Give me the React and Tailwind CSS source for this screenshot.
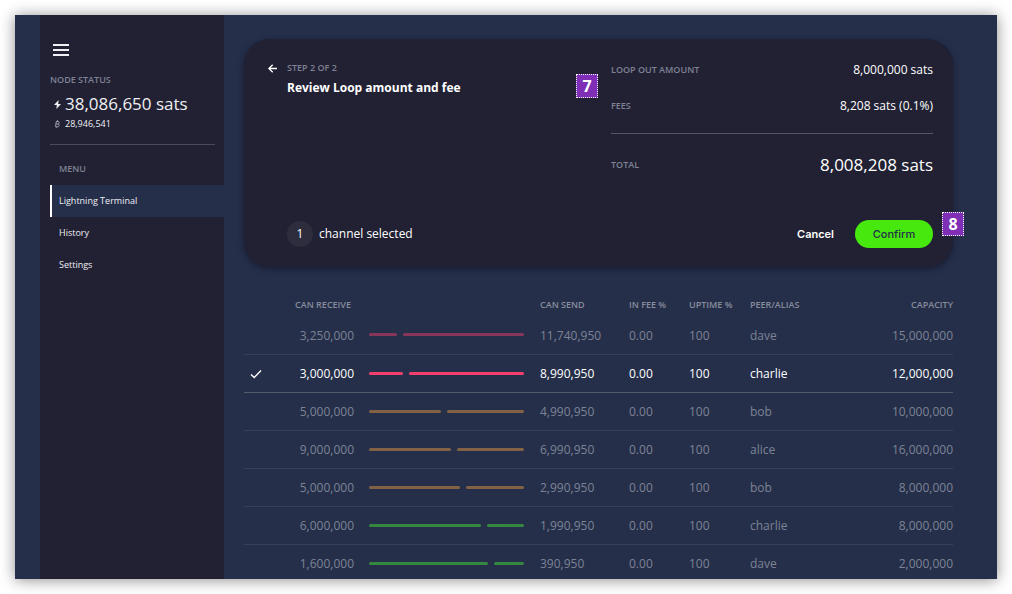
import React from "react";

const channels = [
  { receive: "3,250,000", send: "11,740,950", peer: "dave", capacity: "15,000,000", ratio: 19, tone: "bg-[#e83e6b]" },
  { receive: "3,000,000", send: "8,990,950", peer: "charlie", capacity: "12,000,000", ratio: 22.5, tone: "bg-[#f5406e]", selected: true },
  { receive: "5,000,000", send: "4,990,950", peer: "bob", capacity: "10,000,000", ratio: 48.5, tone: "bg-[#e09440]" },
  { receive: "9,000,000", send: "6,990,950", peer: "alice", capacity: "16,000,000", ratio: 55, tone: "bg-[#e09440]" },
  { receive: "5,000,000", send: "2,990,950", peer: "bob", capacity: "8,000,000", ratio: 61, tone: "bg-[#e09440]" },
  { receive: "6,000,000", send: "1,990,950", peer: "charlie", capacity: "8,000,000", ratio: 75, tone: "bg-[#46e035]" },
  { receive: "1,600,000", send: "390,950", peer: "dave", capacity: "2,000,000", ratio: 80, tone: "bg-[#46e035]" },
];

const label = "text-[9px] leading-4 font-semibold text-[#7f8193]";

function Marker({ children, className }) {
  return (
    <span
      className={`absolute flex h-6 w-[22px] items-center justify-center border border-dotted border-white bg-[#7f2fb5] text-base font-bold text-white ${className}`}
    >
      {children}
    </span>
  );
}

function MenuItem({ active, children }) {
  return (
    <li>
      <a
        href="#"
        className={`flex h-8 items-center border-l-2 pl-[7px] text-[9px] ${
          active ? "border-white bg-[#252f4a]" : "border-transparent"
        }`}
      >
        {children}
      </a>
    </li>
  );
}

function Sidebar() {
  return (
    <aside className="w-46 shrink-0 bg-[#212133] pt-[23px] pl-[10px] text-[#f0f0f4]">
      <button type="button" aria-label="Toggle menu" className="flex h-6 w-6 items-center pl-[3px]">
        <svg width="16" height="12" viewBox="0 0 16 12" fill="none" stroke="currentColor" strokeWidth="1.8">
          <path d="M0 1h16M0 6h16M0 11h16" />
        </svg>
      </button>
      <div className={`${label} mt-[10px]`}>NODE STATUS</div>
      <div className="mt-1 flex items-center gap-1 pl-1 text-[17px] leading-6">
        <svg width="7" height="9" viewBox="0 0 7 9" fill="currentColor">
          <path d="M4.6 0 0 5h2.8L2.4 9 7 3.9H4.2z" />
        </svg>
        38,086,650 sats
      </div>
      <div className="flex items-center gap-1 pl-1 text-[9px] leading-4">
        <svg width="7" height="8" viewBox="0 0 7 8" fill="none" stroke="#9a9aa8">
          <path d="M2 1.5h2q1.3 0 1.2 1.2T3.8 4H1.8M3.8 4q1.5 0 1.3 1.4T3.5 6.7H1.3M2.3 1.5 1.5 6.7M3.5 0.2v1.2M2.8 6.7v1.2" />
        </svg>
        28,946,541
      </div>
      <hr className="mt-3 mr-[9px] border-[#4a4a58]" />
      <div className={`${label} mt-4 mb-2 pl-[9px]`}>MENU</div>
      <nav>
        <ul>
          <MenuItem active>Lightning Terminal</MenuItem>
          <MenuItem>History</MenuItem>
          <MenuItem>Settings</MenuItem>
        </ul>
      </nav>
    </aside>
  );
}

function ReviewCard() {
  return (
    <section className="relative rounded-[26px] bg-[#212133] pt-[21px] pr-5 pb-[19px] pl-6 text-white shadow-[0_2px_6px_rgba(12,14,30,0.55)]">
      <div className="flex justify-between">
        <div className="flex items-start gap-2">
          <button type="button" aria-label="Back" className="flex h-4 w-[11px] items-center">
            <svg width="9" height="9" viewBox="0 0 9 9" fill="none" stroke="currentColor" strokeWidth="1.3">
              <path d="M9 4.5H1M4.7 0.7 0.9 4.5l3.8 3.8" />
            </svg>
          </button>
          <div>
            <div className={label}>STEP 2 OF 2</div>
            <h1 className="mt-1 text-xs leading-4 font-bold">Review Loop amount and fee</h1>
          </div>
        </div>
        <dl className="w-[322px]">
          <div className="flex h-5 items-center justify-between">
            <dt className={label}>LOOP OUT AMOUNT</dt>
            <dd className="text-xs">8,000,000 sats</dd>
          </div>
          <div className="mt-4 flex h-5 items-center justify-between">
            <dt className={label}>FEES</dt>
            <dd className="text-xs">8,208 sats (0.1%)</dd>
          </div>
          <div className="mt-[17px] flex items-center justify-between border-t border-[#555563] pt-[19px]">
            <dt className={label}>TOTAL</dt>
            <dd className="text-[17px] leading-6">8,008,208 sats</dd>
          </div>
        </dl>
      </div>
      <div className="mt-[43px] flex h-7 items-center pl-[19px]">
        <span className="mr-[6px] flex size-[26px] items-center justify-center rounded-full bg-[#2d2d3d] text-xs">1</span>
        <span className="text-xs">channel selected</span>
        <button type="button" className="mr-[21px] ml-auto font-['Inter'] text-[11px] font-semibold">
          Cancel
        </button>
        <button
          type="button"
          className="h-7 w-[78px] rounded-full bg-[#46e80e] font-['Inter'] text-[11px] font-medium text-[#252f4a]"
        >
          Confirm
        </button>
      </div>
      <Marker className="top-[35px] right-[355px]">7</Marker>
      <Marker className="top-[173px] -right-[11px]">8</Marker>
    </section>
  );
}

function ChannelRow({ channel }) {
  const dim = channel.selected ? "" : "opacity-50";
  return (
    <tr className={`h-[38px] border-b ${channel.selected ? "border-[#555a68] text-white" : "border-[#3a3f55] text-[#7d8395]"}`}>
      <td className="pt-[2px] pl-[6px]">
        {channel.selected && (
          <svg width="12" height="10" viewBox="0 0 12 10" fill="none" stroke="currentColor" strokeWidth="1.4" role="img" aria-label="Selected">
            <path d="M1 5.4 4.2 8.6 11 1.6" />
          </svg>
        )}
      </td>
      <td className="pt-[2px] text-right">{channel.receive}</td>
      <td className="pr-4 pl-[15px]">
        <div className={`flex h-[3px] gap-[6px] ${dim}`}>
          <span className={`rounded-full ${channel.tone}`} style={{ flex: `${channel.ratio} 1 0` }} />
          <span className={`rounded-full ${channel.tone}`} style={{ flex: `${100 - channel.ratio} 1 0` }} />
        </div>
      </td>
      <td className="pt-[2px]">{channel.send}</td>
      <td className="pt-[2px]">0.00</td>
      <td className="pt-[2px]">100</td>
      <td className="pt-[2px]">{channel.peer}</td>
      <td className="pt-[2px] text-right">{channel.capacity}</td>
    </tr>
  );
}

function ChannelTable() {
  return (
    <table className="mt-[27px] w-full table-fixed border-collapse text-xs">
      <thead>
        <tr className="h-[22px] text-left text-[9px] whitespace-nowrap text-[#878c9c]">
          <th className="w-10" aria-label="Selected" />
          <th className="w-[70px] pr-[3px] text-right font-semibold">CAN RECEIVE</th>
          <th className="w-[186px]" aria-label="Balance" />
          <th className="w-[89px] font-semibold">CAN SEND</th>
          <th className="w-[60px] font-semibold">IN FEE %</th>
          <th className="w-[61px] font-semibold">UPTIME %</th>
          <th className="font-semibold">PEER/ALIAS</th>
          <th className="text-right font-semibold">CAPACITY</th>
        </tr>
      </thead>
      <tbody>
        {channels.map((channel, index) => (
          <ChannelRow key={index} channel={channel} />
        ))}
      </tbody>
    </table>
  );
}

export default function App() {
  return (
    <div className="h-screen overflow-hidden bg-white p-[15px] font-['Open_Sans',sans-serif]">
      <div className="flex h-full overflow-hidden bg-[#252f4a] pl-[25px] shadow-[0_1px_14px_rgba(0,0,0,0.45)]">
        <Sidebar />
        <main className="min-w-0 flex-1 pt-6 pr-11 pl-5">
          <ReviewCard />
          <ChannelTable />
        </main>
      </div>
    </div>
  );
}
